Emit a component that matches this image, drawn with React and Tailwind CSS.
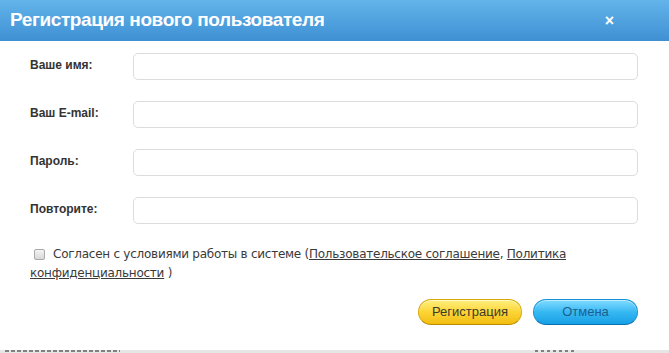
import React from 'react';

const fields = [
  { label: 'Ваше имя:', type: 'text' },
  { label: 'Ваш E-mail:', type: 'email' },
  { label: 'Пароль:', type: 'password' },
  { label: 'Повторите:', type: 'password' },
];

const App = () => {
  return (
    <div className="w-[669px] h-[353px] bg-white flex flex-col overflow-hidden font-['Liberation_Sans',Arial,sans-serif]">
      {/* Header */}
      <div className="h-[41px] shrink-0 flex items-center justify-between pl-[10px] pr-[55px] bg-gradient-to-b from-[#62b4ea] to-[#3f90d3]">
        <h1 className="text-white font-bold text-[19px] tracking-[-0.4px]">Регистрация нового пользователя</h1>
        <button className="text-white font-bold text-[16px] leading-none">×</button>
      </div>

      {/* Form */}
      <div className="flex-1 flex flex-col pt-[12px] pl-[30px] pr-[31px]">
        <div className="flex flex-col gap-[21px]">
          {fields.map((f, i) => (
            <div key={i} className="flex items-center h-[27px]">
              <label className="w-[103px] text-[12px] font-bold text-[#333] -mt-[3px]">{f.label}</label>
              <input
                type={f.type}
                className="flex-1 h-[27px] rounded-[5px] border border-[#dcdcdc] bg-white px-2 text-[12px] outline-none"
              />
            </div>
          ))}
        </div>

        <div className="mt-[22px] text-[12px] leading-[17px] text-[#3a3a3a] font-['DejaVu_Sans',Verdana,sans-serif] tracking-[-0.25px]">
          <span className="inline-block w-[23px] pl-[4px] align-[-2px]">
            <span className="inline-block w-[11px] h-[11px] rounded-[2px] border border-[#a9a9a9] bg-gradient-to-b from-[#f4f4f4] to-[#d8d8d8]" />
          </span>
          Согласен с условиями работы в системе (<a href="#" className="underline">Пользовательское соглашение</a>,{' '}
          <a href="#" className="underline">Политика конфиденциальности</a> )
        </div>

        <div className="mt-[17px] flex justify-end gap-[11px]">
          <button className="w-[104px] h-[26px] rounded-full border border-[#d9a90a] border-b-[#b98c00] bg-gradient-to-b from-[#fff07a] via-[#fcd535] to-[#f2bd0c] text-[13px] text-[#3a3a2a] shadow-[inset_0_1px_0_rgba(255,255,255,0.6)]">
            Регистрация
          </button>
          <button className="w-[105px] h-[26px] rounded-full border border-[#1592d6] border-b-[#0b6fae] bg-gradient-to-b from-[#7edcff] via-[#36b8f2] to-[#15a0e6] text-[13px] text-[#1d5f8e] shadow-[inset_0_1px_0_rgba(255,255,255,0.5)]">
            Отмена
          </button>
        </div>
      </div>

      {/* Edge of page behind */}
      <div className="h-[3px] shrink-0 bg-[#e6e6e6] flex items-start">
        <div className="ml-[5px] w-[115px] h-[2px] bg-[repeating-linear-gradient(90deg,#555_0_4px,transparent_4px_6px)] opacity-70" />
        <div className="ml-[415px] w-[42px] h-[2px] bg-[repeating-linear-gradient(90deg,#555_0_3px,transparent_3px_6px)] opacity-70" />
      </div>
    </div>
  );
};

export default App;
